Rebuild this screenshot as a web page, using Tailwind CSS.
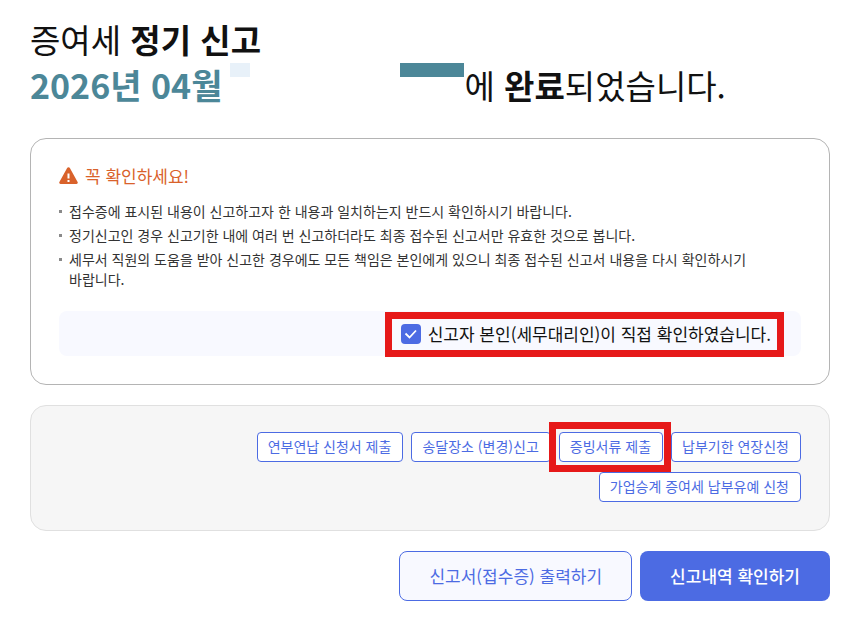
<!DOCTYPE html>
<html lang="ko">
  <head>
    <meta charset="UTF-8" />
    <meta name="viewport" content="width=device-width, initial-scale=1.0" />
    <title>증여세 정기 신고</title>
    <script src="https://cdn.jsdelivr.net/npm/@tailwindcss/browser@4"></script>
  </head>
  <body class="bg-white pl-[30px] pr-[25px] pt-4 pb-6 font-['Noto_Sans_CJK_KR',sans-serif] text-[#111] break-keep">
    <!-- Result title -->
    <h1 class="text-[33px] leading-[46px]">
      <span class="block">증여세 <strong class="font-bold">정기 신고</strong></span>
      <span class="flex">
        <strong class="text-[34px] font-bold text-[#4c8798]">2026년 04월</strong>
        <span class="ml-2 mt-px h-[14px] w-5 bg-[#e8f1f9]"></span>
        <span class="ml-[150px] mt-px h-[14px] w-16 bg-[#4c8798]"></span>
        <span>에 <strong class="font-bold">완료</strong>되었습니다.</span>
      </span>
    </h1>

    <main class="mt-[30px] flex flex-col gap-5">
      <!-- Notice -->
      <section class="rounded-2xl border border-[#b4b4b4] px-7 pt-[27px] pb-7">
        <h2 class="flex items-center gap-[7px] text-[17px] leading-5 text-[#d9622b]">
          <svg class="h-[18px] w-[19px]" viewBox="0 0 19 18" aria-hidden="true">
            <path d="M8 1.2a1.7 1.7 0 0 1 3 0l7.6 13.7a1.4 1.4 0 0 1-1.2 2.1H1.6a1.4 1.4 0 0 1-1.2-2.1z" fill="#d9622b" />
            <path d="M8.5 6.5h2v5h-2zM8.5 13h2v2h-2z" fill="#fff" />
          </svg>
          꼭 확인하세요!
        </h2>
        <ul class="mt-[15px] flex flex-col gap-1 text-[14px] leading-5 text-[#333]">
          <li class="flex gap-[7px]">
            <span class="mt-[9px] size-[3px] shrink-0 bg-[#8a8a8a]"></span>
            <span>접수증에 표시된 내용이 신고하고자 한 내용과 일치하는지 반드시 확인하시기 바랍니다.</span>
          </li>
          <li class="flex gap-[7px]">
            <span class="mt-[9px] size-[3px] shrink-0 bg-[#8a8a8a]"></span>
            <span>정기신고인 경우 신고기한 내에 여러 번 신고하더라도 최종 접수된 신고서만 유효한 것으로 봅니다.</span>
          </li>
          <li class="flex gap-[7px]">
            <span class="mt-[9px] size-[3px] shrink-0 bg-[#8a8a8a]"></span>
            <span>세무서 직원의 도움을 받아 신고한 경우에도 모든 책임은 본인에게 있으니 최종 접수된 신고서 내용을 다시 확인하시기 바랍니다.</span>
          </li>
        </ul>
        <div class="mt-[22px] flex h-[45px] items-center justify-end rounded-lg bg-[#f8f9ff] pr-[30px]">
          <div class="relative flex items-center gap-[7px]">
            <span class="relative size-5">
              <input id="agree" type="checkbox" checked class="block size-5 appearance-none rounded bg-[#4c6be3]" />
              <svg class="pointer-events-none absolute inset-0 size-5" viewBox="0 0 20 20" aria-hidden="true">
                <path d="M4.5 9.5l4 4L15 6.5" fill="none" stroke="#fff" stroke-width="1.8" />
              </svg>
            </span>
            <label for="agree" class="text-[17px] leading-6 text-[#111]">신고자 본인(세무대리인)이 직접 확인하였습니다.</label>
            <span class="pointer-events-none absolute -top-[10px] -right-[13px] -bottom-[11px] -left-4 border-[7px] border-[#e61919]"></span>
          </div>
        </div>
      </section>

      <!-- Related applications -->
      <section class="flex flex-wrap justify-end gap-x-2 gap-y-[10px] rounded-2xl border border-[#e0e0e0] bg-[#f6f6f6] pt-[26px] pr-7 pb-7 pl-[200px] text-[14px] text-[#4c6be3]">
        <button class="h-[30px] rounded border border-[#4c6be3] bg-white pr-[11px] pb-[2px] pl-[10px]">연부연납 신청서 제출</button>
        <button class="h-[30px] rounded border border-[#4c6be3] bg-white pr-[11px] pb-[2px] pl-[10px]">송달장소 (변경)신고</button>
        <div class="relative">
          <button class="h-[30px] rounded border border-[#4c6be3] bg-white pr-[11px] pb-[2px] pl-[10px]">증빙서류 제출</button>
          <span class="pointer-events-none absolute -inset-y-[10px] -right-2 -left-[10px] border-[7px] border-[#e61919]"></span>
        </div>
        <button class="h-[30px] rounded border border-[#4c6be3] bg-white pr-[11px] pb-[2px] pl-[10px]">납부기한 연장신청</button>
        <button class="h-[30px] rounded border border-[#4c6be3] bg-white pr-[11px] pb-[2px] pl-[10px]">가업승계 증여세 납부유예 신청</button>
      </section>

      <div class="flex justify-end gap-2 text-[17px]">
        <button class="h-[50px] rounded-lg border border-[#4c6be3] bg-[#f8f9ff] px-[29px] text-[#4c6be3]">신고서(접수증) 출력하기</button>
        <button class="h-[50px] rounded-lg bg-[#4c6be3] px-[30px] font-medium text-white">신고내역 확인하기</button>
      </div>
    </main>
  </body>
</html>
